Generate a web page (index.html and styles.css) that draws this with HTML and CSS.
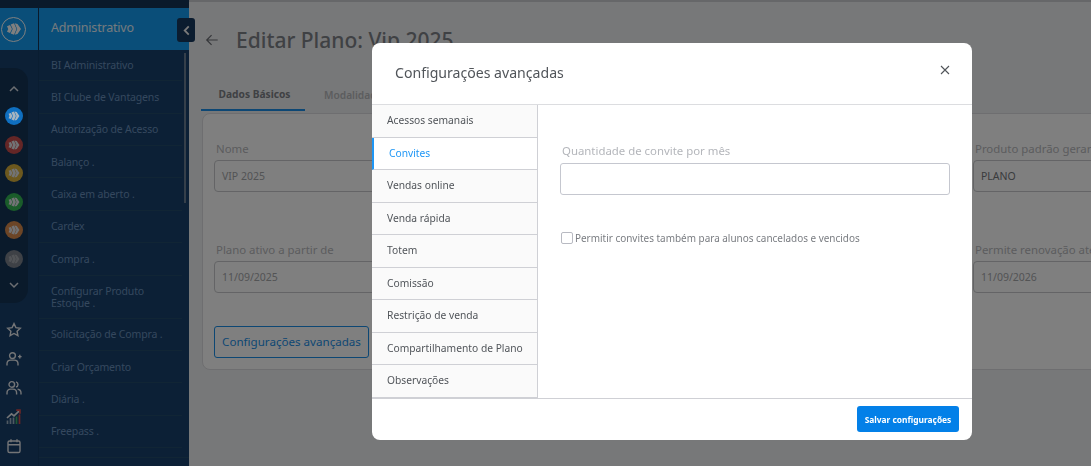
FILE: index.html
```html
<!DOCTYPE html>
<html lang="pt-BR">
<head>
<meta charset="utf-8">
<title>Editar Plano</title>
<link rel="stylesheet" href="styles.css">
</head>
<body>
<svg class="defs" width="0" height="0" aria-hidden="true">
  <symbol id="mark" viewBox="0 0 18 18">
    <path d="M2 6.200 5 5 7 9 5 13 2 11.800 3.200 9Z"/>
    <path d="M5.700 4.400 9 3.200 11.500 9 9 14.800 5.700 13.600 7.700 9Z"/>
    <path d="M9.700 3.200 12.500 4 16 9 12.500 14 9.700 14.800 12.200 9Z"/>
  </symbol>
</svg>
<div class="page">
  <aside class="sidebar">
    <div class="side-top"></div>
    <header class="side-head">
      <div class="logo-cell">
        <span class="logo-ring"><svg class="logo-mark"><use href="#mark"/></svg></span>
      </div>
      <div class="side-title">Administrativo</div>
    </header>
    <div class="side-body">
      <nav class="rail">
        <div class="pill">
          <svg class="chev" viewBox="0 0 12 8"><path d="M2 6 6 2l4 4"/></svg>
          <span class="dot dot-blue"><svg><use href="#mark"/></svg></span>
          <span class="dot dot-red"><svg><use href="#mark"/></svg></span>
          <span class="dot dot-yellow"><svg><use href="#mark"/></svg></span>
          <span class="dot dot-green"><svg><use href="#mark"/></svg></span>
          <span class="dot dot-orange"><svg><use href="#mark"/></svg></span>
          <span class="dot dot-grey"><svg><use href="#mark"/></svg></span>
          <svg class="chev" viewBox="0 0 12 8"><path d="M2 2l4 4 4-4"/></svg>
        </div>
        <div class="tools">
          <svg class="tool" viewBox="0 0 16 16"><path d="M8 1.600 9.900 5.600 14.300 6.200 11.100 9.200 11.900 13.600 8 11.500 4.100 13.600 4.900 9.200 1.700 6.200 6.100 5.600Z"/></svg>
          <svg class="tool" viewBox="0 0 16 16"><circle cx="6.500" cy="4.600" r="2.900"/><path d="M1 14.500v-1.700c0-2.300 1.800-3.700 3.800-3.700h3.400c2 0 3.800 1.400 3.800 3.700v1.700"/><path d="M12 5.600h3.600M13.800 3.800v3.600"/></svg>
          <svg class="tool" viewBox="0 0 16 16"><circle cx="5.800" cy="4.400" r="2.800"/><path d="M10 1.800a2.700 2.700 0 0 1 0 5.200"/><path d="M1 14.500v-1.600c0-2.400 1.700-3.800 3.700-3.800h2.200c2 0 3.700 1.400 3.700 3.800v1.600"/><path d="M11.600 9.300c2 .2 3.400 1.600 3.400 3.700v1.500"/></svg>
          <svg class="tool tool-chart" viewBox="0 0 16 16"><path class="t-grey" d="M1.500 15v-3.500M4.500 15V9M7.500 15V8.500"/><path class="t-green" d="M10.500 15V7.500"/><path class="t-red" d="M13.500 15V5.500"/><path d="M1 9 5.500 4.800l2.500 2L13.500 1.600"/><path class="t-red" d="M10.200 1.200h3.800v3.600"/></svg>
          <svg class="tool" viewBox="0 0 16 16"><rect x="2" y="3" width="12" height="11.500" rx="1.600"/><path d="M2 6.800h12M5 1.200v3M11 1.200v3"/></svg>
        </div>
      </nav>
      <div class="menu">
        <a class="item">BI Administrativo</a>
        <a class="item">BI Clube de Vantagens</a>
        <a class="item">Autorização de Acesso</a>
        <a class="item">Balanço .</a>
        <a class="item">Caixa em aberto .</a>
        <a class="item">Cardex</a>
        <a class="item">Compra .</a>
        <a class="item item-tall">Configurar Produto Estoque .</a>
        <a class="item">Solicitação de Compra .</a>
        <a class="item">Criar Orçamento</a>
        <a class="item">Diária .</a>
        <a class="item">Freepass .</a>
        <div class="menu-end"></div>
      </div>
    </div>
    <span class="scroll-thumb"></span>
    <button class="collapse" type="button" aria-label="Recolher">
      <svg viewBox="0 0 10 14"><path d="M7.500 2.500 3 7l4.500 4.500"/></svg>
    </button>
  </aside>

  <main class="main">
    <div class="main-top"></div>
    <div class="title-row">
      <svg class="back" viewBox="0 0 16 16"><path d="M14.500 8H2M7.500 2.500 2 8l5.500 5.500"/></svg>
      <h1 class="title">Editar Plano: Vip 2025</h1>
    </div>
    <div class="tabs">
      <span class="tab tab-on">Dados Básicos</span>
      <span class="tab">Modalidades</span>
    </div>
    <section class="card">
      <div class="form-grid">
        <div class="field">
          <label class="lbl">Nome</label>
          <div class="box">VIP 2025</div>
        </div>
        <div class="field">
          <label class="lbl">Produto padrão gerar parcelas</label>
          <div class="box box-dark">PLANO</div>
        </div>
        <div class="field">
          <label class="lbl">Plano ativo a partir de</label>
          <div class="box">11/09/2025</div>
        </div>
        <div class="field">
          <label class="lbl">Permite renovação até</label>
          <div class="box">11/09/2026</div>
        </div>
      </div>
      <button class="outline" type="button">Configurações avançadas</button>
    </section>
  </main>
</div>

<div class="backdrop"></div>
<div class="modal" role="dialog">
  <header class="modal-head">
    <h2 class="modal-title">Configurações avançadas</h2>
    <svg class="close" viewBox="0 0 10 10"><path d="M1 1l8 8M9 1 1 9"/></svg>
  </header>
  <div class="modal-body">
    <ul class="nav">
      <li class="nav-item">Acessos semanais</li>
      <li class="nav-item nav-on">Convites</li>
      <li class="nav-item">Vendas online</li>
      <li class="nav-item">Venda rápida</li>
      <li class="nav-item">Totem</li>
      <li class="nav-item">Comissão</li>
      <li class="nav-item">Restrição de venda</li>
      <li class="nav-item">Compartilhamento de Plano</li>
      <li class="nav-item">Observações</li>
    </ul>
    <div class="pane">
      <label class="pane-lbl">Quantidade de convite por mês</label>
      <div class="pane-input"></div>
      <div class="check-row">
        <span class="check"></span>
        <span class="check-lbl">Permitir convites também para alunos cancelados e vencidos</span>
      </div>
    </div>
  </div>
  <footer class="modal-foot">
    <button class="save" type="button">Salvar configurações</button>
  </footer>
</div>
</body>
</html>
```

FILE: styles.css
```css
* { box-sizing: border-box; }
html, body { margin: 0; height: 100%; }
body {
  font-family: "Noto Sans", "Open Sans", sans-serif;
  background: #eff0f2;
  overflow: hidden;
  color: #7e8288;
}
.defs { position: absolute; }
.page { display: flex; width: 1091px; height: 466px; overflow: hidden; }

/* sidebar */
.sidebar { position: relative; flex: 0 0 189px; background: #18406c; display: flex; flex-direction: column; }
.side-top { height: 8px; background: #143456; }
.side-head { display: flex; height: 42px; background: #149cf2; }
.logo-cell { flex: 0 0 39px; display: flex; align-items: center; padding-left: 1px; border-right: 1px solid #143456; }
.logo-ring { width: 25px; height: 25px; border: 1px solid #fff; border-radius: 50%; display: flex; align-items: center; justify-content: center; }
.logo-mark { width: 18px; height: 18px; fill: #fff; }
.side-title { padding-left: 12px; font-size: 12.500px; line-height: 40px; color: #fff; opacity: .9; letter-spacing: -.2px; }
.side-body { display: flex; flex: 1; min-height: 0; overflow: hidden; }
.rail { flex: 0 0 39px; border-right: 1px solid #153a62; padding-top: 18px; }
.pill { width: 28px; height: 235px; background: #143456; border-radius: 0 14px 14px 0; display: flex; flex-direction: column; align-items: center; padding-top: 17px; }
.chev { width: 12px; height: 8px; fill: none; stroke: #d8dde4; stroke-width: 1.500; flex: none; }
.dot { width: 18px; height: 18px; border-radius: 50%; margin-top: 10.500px; flex: none; display: flex; align-items: center; justify-content: center; }
.chev + .dot { margin-top: 14px; }
.dot svg { width: 14px; height: 14px; fill: #e4e6ea; }
.dot-blue { position: relative; z-index: 3; background: #0f6fc0; }
.dot-blue svg { fill: #a8b4c0; }
.dot-red { background: #c84c4c; }
.dot-yellow { background: #d8b03c; }
.dot-green { background: #34b854; }
.dot-orange { background: #d88a4c; }
.dot-grey { background: #7c828c; }
.dot-grey svg { fill: #a4a8ae; }
.dot + .chev { margin-top: 13px; }
.tools { display: flex; flex-direction: column; align-items: center; gap: 13px; width: 27px; margin-top: 19px; }
.tool { width: 16px; height: 16px; fill: none; stroke: #e8eaee; stroke-width: 1.400; flex: none; }
.tool-chart { stroke-width: 1.700; }
.t-red { stroke: #d24a4a; }
.t-green { stroke: #3fae6a; }
.t-grey { stroke: #9fb2c4; }
.menu { flex: 1; min-width: 0; margin-top: -1.200px; padding-right: 7px; }
.item { display: flex; align-items: center; height: 32.400px; padding: 0 12px; border-bottom: 1px solid #224a6b; font-size: 10.500px; line-height: 12px; color: #6a90bc; letter-spacing: -.15px; }
.item-tall { height: 43px; }
.menu-end { height: 10px; margin-right: -7px; border-bottom: 1px solid #224a6b; }
.scroll-thumb { position: absolute; left: 184px; top: 53px; width: 2px; height: 150px; background: #6a7f95; }
.collapse { position: absolute; left: 177px; top: 18px; width: 18px; height: 24px; padding: 0; border: 0; border-radius: 3px; background: #16385e; display: flex; align-items: center; justify-content: center; }
.collapse svg { width: 9px; height: 13px; fill: none; stroke: #f4f4f4; stroke-width: 2; }

/* main */
.main { flex: 1; min-width: 0; overflow: hidden; }
.main-top { height: 2px; background: #ccced2; }
.title-row { display: flex; align-items: center; height: 66px; padding: 10px 0 0 16px; }
.back { width: 14px; height: 14px; fill: none; stroke: #6a6e74; stroke-width: 1.400; flex: none; }
.title { margin: 0 0 0 17px; font-size: 21px; font-weight: 500; color: #7e8288; white-space: nowrap; }
.tabs { display: flex; height: 43px; margin-left: 12px; }
.tab { display: flex; align-items: center; justify-content: center; padding: 10px 0 0; margin-right: 19px; font-size: 10.200px; color: #b8babd; font-weight: 600; height: 43px; }
.tab-on { width: 104px; padding-left: 3px; color: #7e8288; font-weight: 700; border-bottom: 2px solid #1b8fe8; }
.card { width: 1100px; height: 257px; margin: 2px 0 0 13px; padding: 22px 11px 0 11px; background: #fff; border: 1px solid #dcdde0; border-radius: 8px; }
.form-grid { display: grid; grid-template-columns: 743px 300px; column-gap: 16px; row-gap: 45px; align-items: start; }
.field { display: flex; flex-direction: column; }
.lbl { padding-left: 2px; height: 24px; font-size: 11.400px; line-height: 26px; color: #b8b9bc; white-space: nowrap; }
.box { height: 32px; padding-left: 7px; border: 1px solid #c8c9cc; border-radius: 4px; font-size: 10.500px; line-height: 30px; color: #a6a8ab; }
.box-dark { color: #75777b; }
.outline { display: block; margin-top: 33px; width: 155px; height: 32px; padding: 0 0 2px; background: transparent; border: 1px solid #1b8fe8; border-radius: 3px; font: 11.600px "Noto Sans", sans-serif; color: #1b8fe8; white-space: nowrap; }

/* modal */
.backdrop { position: fixed; z-index: 2; inset: 0; background: rgba(0, 0, 0, .5); }
.modal { position: fixed; z-index: 3; left: 372px; top: 43px; width: 600px; height: 397px; display: flex; flex-direction: column; background: #fff; border-radius: 8px; overflow: hidden; }
.modal-head { flex: 0 0 62px; display: flex; justify-content: space-between; padding: 0 22px 0 23px; border-bottom: 1px solid #dcdde0; }
.modal-title { margin: 0; font-size: 14.100px; font-weight: 400; line-height: 60px; color: #51555a; }
.close { width: 10px; height: 10px; margin-top: 22px; fill: none; stroke: #51555a; stroke-width: 1.100; }
.modal-body { flex: 1; display: flex; min-height: 0; }
.nav { flex: 0 0 166px; margin: 0; padding: 0; list-style: none; background: #fafafa; border-right: 1px solid #cfd0d5; }
.nav-item { height: 32.500px; padding-left: 15px; border-bottom: 1px solid #cfd0d5; font-size: 10.250px; line-height: 30px; color: #51555a; }
.nav-on { background: #fff; border-left: 2px solid #1e96f5; color: #1e96f5; }
.pane { flex: 1; padding: 36px 22px 0; }
.pane-lbl { display: block; padding-left: 2px; font-size: 11.400px; line-height: 20px; color: #b4b6bb; }
.pane-input { height: 32px; margin-top: 2px; border: 1px solid #c5c7cf; border-radius: 3px; }
.check-row { display: flex; align-items: center; margin: 36px 0 0 1px; }
.check { width: 12px; height: 12px; border: 1px solid #b8bac2; border-radius: 2px; flex: none; }
.check-lbl { margin-left: 2px; font-size: 9.950px; line-height: 14px; color: #7a7d82; white-space: nowrap; }
.modal-foot { flex: 0 0 42px; display: flex; justify-content: flex-end; padding: 7px 13px 0 0; border-top: 1px solid #cfd0d5; }
.save { width: 102px; height: 26px; padding: 0; border: 0; border-radius: 3px; background: #0380e8; color: #fff; font: 700 8.400px "Noto Sans", sans-serif; white-space: nowrap; }
```
